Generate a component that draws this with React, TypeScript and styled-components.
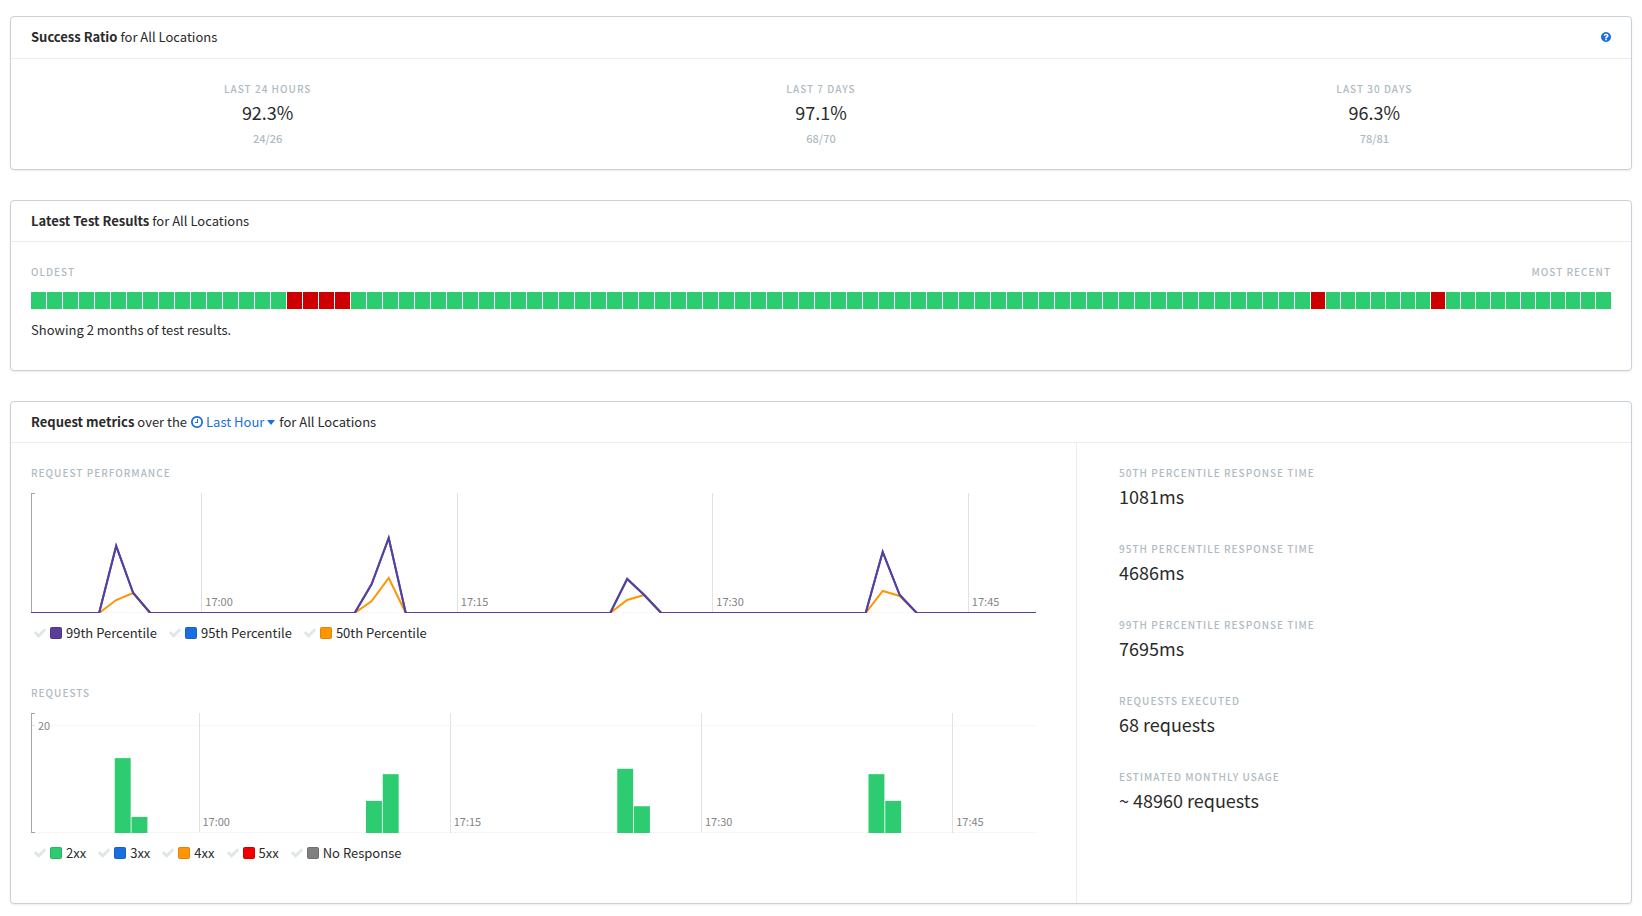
import React from "react";
import styled, { createGlobalStyle } from "styled-components";

const GlobalStyle = createGlobalStyle`
  *, *::before, *::after { box-sizing: border-box; }
  body {
    margin: 0;
    background: #fff;
    color: #2a2a2a;
    font-family: "Noto Sans CJK SC", "Open Sans", sans-serif;
    font-size: 13px;
    line-height: 20px;
  }
`;

const Page = styled.main`
  display: flex;
  flex-direction: column;
  gap: 30px;
  padding: 16px 10px 12px;
`;

const Card = styled.section`
  border: 1px solid #c8d0d8;
  border-radius: 4px;
  background: #fff;
  box-shadow: 0 1px 2px rgba(0, 0, 0, 0.08);
  overflow: hidden;
`;

const CardHeader = styled.header`
  display: flex;
  align-items: flex-start;
  justify-content: space-between;
  padding: 10px 20px;
  border-bottom: 1px solid #ebeced;
`;

const CardTitle = styled.h2`
  display: flex;
  align-items: center;
  gap: 3px;
  margin: 0;
  font-size: 13px;
  font-weight: 400;
  line-height: 20px;
`;

const HelpButton = styled.button`
  display: flex;
  padding: 5px 0 6px;
  border: 0;
  background: none;
  color: #1a6fe0;
  cursor: pointer;
`;

const RangeButton = styled.button`
  display: flex;
  align-items: center;
  gap: 3px;
  margin: 0 1px;
  padding: 0;
  border: 0;
  background: none;
  color: #1a6fe0;
  font: inherit;
  cursor: pointer;
`;

const Caret = styled.span`
  border: 4px solid transparent;
  border-top: 5px solid currentColor;
  border-bottom: 0;
`;

const Label = styled.div`
  color: #b0bac1;
  font-size: 10px;
  font-weight: 500;
  line-height: 20px;
  letter-spacing: 1px;
  text-transform: uppercase;
`;

const Value = styled.div`
  font-size: 18px;
  line-height: 26px;
`;

const Count = styled.div`
  margin-top: 3px;
  color: #b0bac1;
  font-size: 11px;
  font-weight: 500;
  line-height: 20px;
`;

const RatioGrid = styled.div`
  display: grid;
  grid-template-columns: repeat(3, 1fr);
  margin: 0 -20px;
  padding: 20px 0 21px;
  text-align: center;
`;

const ResultsBody = styled.div`
  padding: 20px 20px 30px;
`;

const ResultsEnds = styled.div`
  display: flex;
  justify-content: space-between;
  margin-bottom: 10px;
`;

const ResultsBar = styled.div`
  display: grid;
  grid-template-columns: repeat(80, minmax(0, 16fr)) repeat(20, minmax(0, 15fr));
  height: 17px;
`;

const Result = styled.span<{ $failed: boolean }>`
  background: ${(p) => (p.$failed ? "#cc0000" : "#2ecc71")};
  border-right: 1px solid #fff;

  &:last-child { border-right: 0; }
`;

const ResultsNote = styled.p`
  margin: 11px 0 0;
`;

const MetricsBody = styled.div`
  display: grid;
  grid-template-columns: minmax(0, 1065fr) minmax(0, 555fr);
`;

const Charts = styled.div`
  padding: 20px 40px 0 20px;
`;

const ChartBlock = styled.section`
  padding-bottom: 40px;
`;

const Plot = styled.svg`
  display: block;
  width: 100%;
  height: 120px;
  margin: 10px 0;
`;

const AxisText = styled.text`
  fill: #858585;
  font-size: 11px;
`;

const Legend = styled.div`
  display: flex;
  gap: 12px;
  padding-left: 3px;
`;

const LegendItem = styled.label`
  display: flex;
  align-items: center;
  gap: 4px;
  cursor: pointer;
`;

const Tick = styled.span`
  position: relative;
  display: flex;
  color: #e1e7e9;

  input {
    position: absolute;
    inset: 0;
    width: 100%;
    height: 100%;
    margin: 0;
    opacity: 0;
  }
`;

const Swatch = styled.span<{ $color: string }>`
  width: 12px;
  height: 12px;
  border: 1px solid rgba(0, 0, 0, 0.12);
  border-radius: 2px;
  background: ${(p) => p.$color};
`;

const Summary = styled.div`
  display: flex;
  flex-direction: column;
  gap: 30px;
  padding: 20px 20px 20px 42px;
  border-left: 1px solid #ebeced;
`;

const HelpIcon = () => (
  <svg width="10" height="10" viewBox="128 128 1536 1536" fill="currentColor" aria-hidden="true">
    <path d="M1024 1376v-192q0-14-9-23t-23-9h-192q-14 0-23 9t-9 23v192q0 14 9 23t23 9h192q14 0 23-9t9-23zm256-672q0-88-55.5-163t-138.5-116-170-41q-243 0-371 213-15 24 8 42l132 100q7 6 19 6 16 0 25-12 53-68 86-92 34-24 86-24 48 0 85.5 26t37.5 59q0 38-20 61t-68 45q-63 28-115.5 86.5t-52.5 125.5v36q0 14 9 23t23 9h192q14 0 23-9t9-23q0-19 21.5-49.5t54.5-49.5q32-18 49-28.5t46-35 44.5-48 28-60.5 12.5-81zm384 192q0 209-103 385.5t-279.5 279.5-385.5 103-385.5-103-279.5-279.5-103-385.5 103-385.5 279.5-279.5 385.5-103 385.5 103 279.5 279.5 103 385.5z" />
  </svg>
);

const ClockIcon = () => (
  <svg width="12" height="12" viewBox="0 128 1536 1536" fill="currentColor" aria-hidden="true">
    <path d="M896 544v448q0 14-9 23t-23 9h-320q-14 0-23-9t-9-23v-64q0-14 9-23t23-9h224v-352q0-14 9-23t23-9h64q14 0 23 9t9 23zm416 352q0-148-73-273t-198-198-273-73-273 73-198 198-73 273 73 273 198 198 273 73 273-73 198-198 73-273zm224 0q0 209-103 385.5t-279.5 279.5-385.5 103-385.5-103-279.5-279.5-103-385.5 103-385.5 279.5-279.5 385.5-103 385.5 103 279.5 279.5 103 385.5z" />
  </svg>
);

const CheckIcon = () => (
  <svg width="12" height="12" viewBox="120 140 1552 1552" fill="currentColor" aria-hidden="true">
    <path d="M1671 566q0 40-28 68l-724 724-136 136q-28 28-68 28t-68-28l-136-136-362-362q-28-28-28-68t28-68l136-136q28-28 68-28t68 28l294 295 656-657q28-28 68-28t68 28l136 136q28 28 28 68z" />
  </svg>
);

const ratios = [
  { period: "Last 24 Hours", percent: "92.3%", count: "24/26" },
  { period: "Last 7 Days", percent: "97.1%", count: "68/70" },
  { period: "Last 30 Days", percent: "96.3%", count: "78/81" },
];

const failedRuns = new Set([16, 17, 18, 19, 80, 88]);
const runs = Array.from({ length: 100 }, (_, i) => failedRuns.has(i));

const summary = [
  ["50th percentile response time", "1081ms"],
  ["95th percentile response time", "4686ms"],
  ["99th percentile response time", "7695ms"],
  ["Requests executed", "68 requests"],
  ["Estimated monthly usage", "~ 48960 requests"],
];

const PLOT_HEIGHT = 120;
const times = ["17:00", "17:15", "17:30", "17:45"];

// Heights in plot units, keyed by minute; every other minute is zero.
const slowest: Record<number, number> = { 5: 67, 6: 20, 20: 29, 21: 75, 35: 34, 36: 18, 50: 61, 51: 18 };
const median: Record<number, number> = { 5: 13, 6: 20, 20: 12, 21: 35, 35: 13, 36: 18, 50: 22, 51: 17 };
const requestCounts: Record<number, number> = { 5: 14, 6: 3, 20: 6, 21: 11, 35: 12, 36: 5, 50: 11, 51: 6 };
const REQUEST_UNIT = 5.35;

const toPoints = (series: Record<number, number>) =>
  Array.from({ length: 60 }, (_, i) => `${i},${PLOT_HEIGHT - (series[i] ?? 0)}`).join(" ");

function PlotFrame({ intervals }: { intervals: number }) {
  return (
    <g shapeRendering="crispEdges">
      {times.map((time, i) => (
        <rect key={time} x={`${((10 + i * 15) / intervals) * 100}%`} y="0" width="1" height="120" fill="#e2e2e2" />
      ))}
      <line x1="4" x2="100%" y1="119.5" y2="119.5" stroke="#eeeeee" strokeDasharray="1 1" />
      <path d="M4 0.5H0.5V119.5H4" fill="none" stroke="#a6a6a6" />
    </g>
  );
}

function TimeLabels({ intervals }: { intervals: number }) {
  return (
    <>
      {times.map((time, i) => (
        <AxisText key={time} x={`${((10 + i * 15) / intervals) * 100}%`} dx="4" y="113">
          {time}
        </AxisText>
      ))}
    </>
  );
}

function SeriesLine({ series, color }: { series: Record<number, number>; color: string }) {
  return (
    <polyline points={toPoints(series)} fill="none" stroke={color} strokeWidth="2" vectorEffect="non-scaling-stroke" />
  );
}

function ChartLegend({ items }: { items: [string, string][] }) {
  return (
    <Legend>
      {items.map(([name, color]) => (
        <LegendItem key={name}>
          <Tick>
            <input type="checkbox" defaultChecked />
            <CheckIcon />
          </Tick>
          <Swatch $color={color} />
          {name}
        </LegendItem>
      ))}
    </Legend>
  );
}

export default function App() {
  return (
    <>
      <GlobalStyle />
      <Page>
        <Card>
          <CardHeader>
            <CardTitle>
              <strong>Success Ratio</strong> <span>for All Locations</span>
            </CardTitle>
            <HelpButton type="button" aria-label="Help">
              <HelpIcon />
            </HelpButton>
          </CardHeader>
          <RatioGrid>
            {ratios.map((ratio) => (
              <div key={ratio.period}>
                <Label>{ratio.period}</Label>
                <Value>{ratio.percent}</Value>
                <Count>{ratio.count}</Count>
              </div>
            ))}
          </RatioGrid>
        </Card>

        <Card>
          <CardHeader>
            <CardTitle>
              <strong>Latest Test Results</strong> <span>for All Locations</span>
            </CardTitle>
          </CardHeader>
          <ResultsBody>
            <ResultsEnds>
              <Label>Oldest</Label>
              <Label>Most recent</Label>
            </ResultsEnds>
            <ResultsBar>
              {runs.map((failed, i) => (
                <Result key={i} $failed={failed} />
              ))}
            </ResultsBar>
            <ResultsNote>Showing 2 months of test results.</ResultsNote>
          </ResultsBody>
        </Card>

        <Card>
          <CardHeader>
            <CardTitle>
              <strong>Request metrics</strong> <span>over the</span>
              <RangeButton type="button" aria-haspopup="menu">
                <ClockIcon />
                Last Hour
                <Caret />
              </RangeButton>
              <span>for All Locations</span>
            </CardTitle>
          </CardHeader>
          <MetricsBody>
            <Charts>
              <ChartBlock>
                <Label>Request performance</Label>
                <Plot role="img" aria-label="Request performance">
                  <PlotFrame intervals={59} />
                  <TimeLabels intervals={59} />
                  <svg width="100%" height="120" viewBox="0 0 59 120" preserveAspectRatio="none">
                    <SeriesLine series={median} color="#ff9505" />
                    <SeriesLine series={slowest} color="#1a6fe0" />
                    <SeriesLine series={slowest} color="#5c3d99" />
                  </svg>
                </Plot>
                <ChartLegend
                  items={[
                    ["99th Percentile", "#5c3d99"],
                    ["95th Percentile", "#1a6fe0"],
                    ["50th Percentile", "#ff9505"],
                  ]}
                />
              </ChartBlock>
              <ChartBlock>
                <Label>Requests</Label>
                <Plot role="img" aria-label="Requests">
                  <line x1="21" x2="100%" y1="12.5" y2="12.5" stroke="#eeeeee" strokeDasharray="1 1" />
                  <line x1="0" x2="4" y1="12.5" y2="12.5" stroke="#e2e2e2" />
                  <PlotFrame intervals={60} />
                  {Object.entries(requestCounts).map(([minute, count]) => (
                    <rect
                      key={minute}
                      x={`${(Number(minute) / 60) * 100}%`}
                      y={PLOT_HEIGHT - count * REQUEST_UNIT}
                      width={`${95 / 60}%`}
                      height={count * REQUEST_UNIT}
                      fill="#2ecc71"
                    />
                  ))}
                  <AxisText x="7" y="17">20</AxisText>
                  <TimeLabels intervals={60} />
                </Plot>
                <ChartLegend
                  items={[
                    ["2xx", "#2ecc71"],
                    ["3xx", "#1a6fe0"],
                    ["4xx", "#ff9505"],
                    ["5xx", "#ee0000"],
                    ["No Response", "#808080"],
                  ]}
                />
              </ChartBlock>
            </Charts>
            <Summary>
              {summary.map(([name, value]) => (
                <div key={name}>
                  <Label>{name}</Label>
                  <Value>{value}</Value>
                </div>
              ))}
            </Summary>
          </MetricsBody>
        </Card>
      </Page>
    </>
  );
}
